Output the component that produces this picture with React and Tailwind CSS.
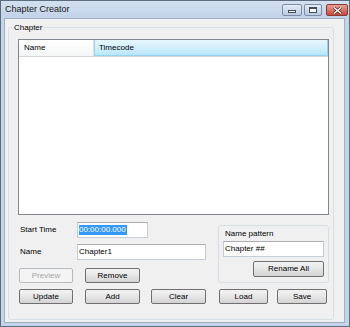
import React from "react";

const Btn = ({ children, disabled, className = "" }) => (
  <button
    className={`h-[15px] rounded-[2px] border text-[8px] leading-none ${
      disabled
        ? "border-[#b8bcbf] bg-[#f4f4f4] text-[#a6a6a6]"
        : "border-[#707070] bg-linear-to-b from-[#f3f3f3] via-[#e6e6e6] to-[#d3d3d3] text-black"
    } ${className}`}
  >
    {children}
  </button>
);

const Field = ({ children, className = "" }) => (
  <div
    className={`h-[16px] flex items-center border border-[#c5cdd6] border-t-[#abadb3] bg-white px-[1px] text-[8px] ${className}`}
  >
    {children}
  </div>
);

const App = () => {
  return (
    <div className="w-[350px] h-[327px] flex flex-col bg-[#c4d5e9] border border-[#5d6d7e] font-['Liberation_Sans',Arial,sans-serif] text-black select-none">
      {/* title bar */}
      <div className="h-[17px] flex items-center bg-linear-to-b from-[#d3e0ef] to-[#c2d3e8]">
        <span className="ml-[4px] text-[9px] text-[#1a1a1a]">Chapter Creator</span>
        <div className="ml-auto flex items-start self-start mt-[3px] mr-[1px] gap-[2px]">
          <div className="w-[20px] h-[12px] rounded-[2px] border border-[#7b8ea5] bg-linear-to-b from-[#e4ecf6] to-[#b9cbe1] flex items-center justify-center">
            <div className="w-[8px] h-[3px] border border-[#3e4c5c] bg-white mt-[3px]" />
          </div>
          <div className="w-[18px] h-[12px] rounded-[2px] border border-[#7b8ea5] bg-linear-to-b from-[#e4ecf6] to-[#b9cbe1] flex items-center justify-center">
            <div className="w-[8px] h-[6px] border border-[#3e4c5c] border-t-2 bg-white" />
          </div>
          <div className="ml-[2px] w-[22px] h-[12px] rounded-[2px] border border-[#8a3a32] bg-linear-to-b from-[#e4a195] to-[#c4473a] flex items-center justify-center">
            <svg width="9" height="7" viewBox="0 0 9 7">
              <path d="M1 0.5 L8 6.5 M8 0.5 L1 6.5" stroke="#3a1a16" strokeWidth="2.6" />
              <path d="M1 0.5 L8 6.5 M8 0.5 L1 6.5" stroke="#ffffff" strokeWidth="1.4" />
            </svg>
          </div>
        </div>
      </div>

      {/* client area */}
      <div className="flex-1 ml-[3px] mr-[4px] mb-[3px] bg-[#f0f0f0] border border-[#9fb0c4] flex flex-col">
        <fieldset className="ml-[3px] mr-[10px] mt-[3px] mb-[2px] flex-1 border border-[#d5dfe5] rounded-[3px] min-w-0">
          <legend className="ml-[3px] px-[2px] text-[8px] leading-[11px]">Chapter</legend>
          <div className="pl-[9px] pr-[4px] pt-[6px] flex flex-col">
            {/* list view */}
            <div className="h-[176px] border border-[#828790] bg-white flex flex-col">
              <div className="h-[17px] flex text-[8px] border-b border-[#d5d5d5]">
                <div className="w-[75px] flex items-center pl-[5px] bg-linear-to-b from-white to-[#f4f5f6] border-r border-[#dfe3e8]">
                  Name
                </div>
                <div className="flex-1 flex items-center pl-[4px] bg-linear-to-b from-[#e8f7fe] via-[#d2f0fd] to-[#b9e6fb] border border-t-0 border-[#96d3f2]">
                  Timecode
                </div>
              </div>
            </div>

            {/* bottom controls */}
            <div className="flex mt-[6px] ml-[1px]">
              <div className="w-[187px] flex flex-col">
                <div className="flex items-center mt-[1px]">
                  <span className="w-[58px] pl-[1px] text-[8px]">Start Time</span>
                  <Field className="w-[71px]">
                    <span className="bg-[#3399ff] text-white leading-[10px] pr-[1px]">00:00:00.000</span>
                  </Field>
                </div>
                <div className="flex items-center mt-[6px]">
                  <span className="w-[58px] pl-[1px] text-[8px]">Name</span>
                  <Field className="flex-1">Chapter1</Field>
                </div>
                <div className="flex mt-[8px]">
                  <Btn disabled className="w-[54px]">Preview</Btn>
                  <Btn className="ml-[12px] w-[55px]">Remove</Btn>
                </div>
              </div>

              <div className="ml-[12px] flex-1 mt-[4px] h-[58px] border border-[#d5dfe5] rounded-[3px] px-[4px] flex flex-col">
                <span className="text-[8px] mt-[2px] ml-[2px] leading-[11px]">Name pattern</span>
                <Field className="mt-[2px]">Chapter ##</Field>
                <div className="flex justify-end mt-[4px]">
                  <Btn className="w-[71px] h-[16px]">Rename All</Btn>
                </div>
              </div>
            </div>

            <div className="flex mt-[6px] ml-[1px]">
              <Btn className="w-[54px]">Update</Btn>
              <Btn className="ml-[12px] w-[55px]">Add</Btn>
              <Btn className="ml-[11px] w-[55px]">Clear</Btn>
              <Btn className="ml-[13px] w-[49px]">Load</Btn>
              <Btn className="ml-[9px] w-[50px]">Save</Btn>
            </div>
          </div>
        </fieldset>
      </div>
    </div>
  );
};

export default App;
